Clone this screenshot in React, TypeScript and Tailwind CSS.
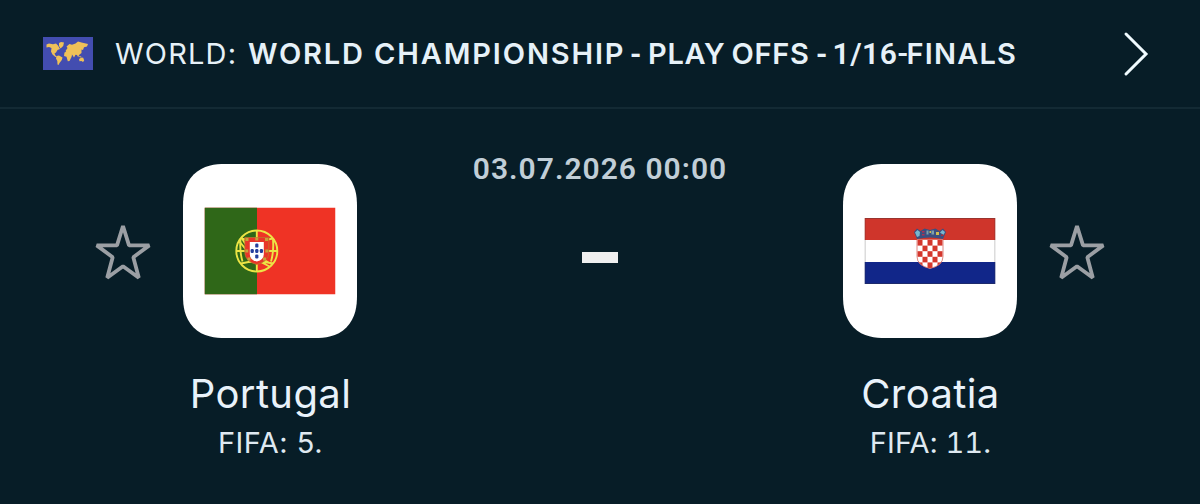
import React from "react";

const SHIELDS = [[0, 0], [-4.6, 0], [4.6, 0], [0, -5.4], [0, 5.4]];

function WorldMap() {
  return (
    <svg width="50" height="33" viewBox="0 0 50 33" className="shrink-0">
      <rect width="50" height="33" fill="#434db0" />
      <g fill="#efc158">
        <path d="M3.5 7.500 6 6.500l4 .8 3-.8 2 2 2 3.500-2.500 1-1.500 2.500-1.500 1 1 2 1.500 1.500-1.500 0-3-2.500-1.500-3L8.500 11 6 10l-2.500.5z" />
        <path d="M16 6 18 5l3 .5-.8 3.500-2.700 2.500-1.500-2.500z" />
        <path d="M13.500 19l2.500-.5 3.500 2-.7 2.500-2.300 3-1 2-1-.5-.2-3.500-1.300-2.500z" />
        <path d="M21.500 15.500l3.500-1.500 2.500.8 1.500 3.200-.5 2-2 4-1.700.2-1.300-4.500-2.500-.8z" />
        <path d="M22.500 14l2-3-1-1.500L26.500 7l2.500.8 3.500-1.300L35 4.500l3.500 1 6.500 1.500-1 2.500-3 .8-1 2.700-1.500-.5 0 3.500-2.500 2-.8 2.200-1.200-2.300-1.500-.2-1.500 2.700-1.800-2.700-1.700 0-2-2.800-2 .5z" />
        <path d="M36 22l2.500-1.500 1.700.3 1 2.700-1.200 1.500-1.500-1-2 .3zM35 18.500l3.500 1.300-1 .7z" />
      </g>
    </svg>
  );
}

function Star() {
  return (
    <svg width="56" height="56" viewBox="0 0 56 56" className="shrink-0" fill="none" stroke="#9b9fa4" strokeWidth="3.8" strokeLinejoin="bevel">
      <path d="M28 2 34 21.400H54.300L38.300 33.200 43.800 53.700 28 42.300 12.200 53.700 17.700 33.200 1.700 21.400H22Z" />
    </svg>
  );
}

function Portugal() {
  return (
    <svg width="131" height="87" viewBox="0 0 131 87" className="-translate-x-[0.5px] -translate-y-[0.5px]">
      <rect width="131" height="87" fill="#ef3325" />
      <rect width="52.500" height="87" fill="#2f6718" />
      <g fill="none" stroke="#ece445" strokeWidth="1.900">
        <circle cx="52.300" cy="43.500" r="20.500" />
        <path d="M52.300 23v41M32 43.500h41M36.500 31q16 4 32 0M36.500 56q16-4 32 0M35 34q12 17 30 25M37 30q9 17 31 27" />
        <path d="M36 32q-1 12 2 22M68.500 32q1 12-2 22" />
      </g>
      <path d="M40.300 30h24v15q0 9-12 12-12-3-12-12z" fill="#e8352a" stroke="#b9802c" strokeWidth=".7" />
      <path d="M45.300 34.500h14v12q0 6-7 7.500-7-1.500-7-7.500z" fill="#fff" />
      {SHIELDS.map(([x, y]) => <rect key={`${x},${y}`} x={50.700 + x} y={41.500 + y} width="3.200" height="4" rx="1.200" fill="#243f9d" />)}
      <path d="M41 30.500h3v3h-3zM50.800 30h3v3h-3zM60.500 30.500h3v3h-3zM40.800 42h3v3h-3zM60.800 42h3v3h-3zM43 50h3v3h-3zM58.500 50h3v3h-3z" fill="#c9a13a" />
    </svg>
  );
}

function Croatia() {
  const cells = Array.from({ length: 25 }, (_, i) => i).filter((i) => i % 2 === 0);
  return (
    <svg width="131" height="66" viewBox="0 0 131 66" className="translate-x-[0.5px]">
      <defs><clipPath id="shield"><path d="M52.500 21.500h26v17q0 9-13 12-13-3-13-12z" /></clipPath></defs>
      <rect width="131" height="66" fill="#fff" />
      <rect width="131" height="22" fill="#cf352b" />
      <rect y="44" width="131" height="22" fill="#112689" />
      <rect x=".5" y=".5" width="130" height="65" fill="none" stroke="#333" strokeOpacity=".35" />
      <g clipPath="url(#shield)">
        <rect x="52" y="21" width="27" height="30" fill="#fff" />
        {cells.map((i) => <rect key={i} x={53 + (i % 5) * 5} y={22 + Math.floor(i / 5) * 5.600} width="5" height="5.600" fill="#d4362c" />)}
      </g>
      <path d="M52.500 21.500h26v17q0 9-13 12-13-3-13-12z" fill="none" stroke="#d8685f" strokeWidth=".8" />
      <path d="M49.500 14 52.500 10.500 56 13l4-2.500 5.500 1.500 5.500-1.500 4 2.500 3.500-2.500 3 3.500-3 7q-13-3-26 0z" fill="#3b4f80" />
      <path d="M50.500 14.500l2.500-2.500 2.500 2-.5 4-2.500 1z" fill="#79b8cf" />
      <path d="M57.500 13h2.500v1.500h-2.500zM57.500 16h2.500v1.500h-2.500z" fill="#b13051" />
      <path d="M62 12.500h2v4h-2zM67 12.500h2.500v4h-2.500z" fill="#7b9fae" />
      <path d="M65 13h1.500v2h-1.500zM71.500 14h3v3h-3z" fill="#cfbd4f" />
      <path d="M75.500 14.500l2.500-2.500 2.500 2-1.500 3z" fill="#79b8cf" />
      <path d="M76.500 16.500h2.500v1.500h-2.500z" fill="#a53040" />
    </svg>
  );
}

function Team({ name, rank, rankClass, children }: { name: string; rank: string; rankClass: string; children: React.ReactNode }) {
  return (
    <div className="flex w-[174px] flex-col items-center">
      <div className="flex h-[174px] w-[174px] items-center justify-center rounded-[42px] bg-white [corner-shape:superellipse(1.25)]">{children}</div>
      <div className="mt-8 whitespace-nowrap pl-px text-[40px] leading-[48px] tracking-[0.4px] text-[#e9f2fa]">{name}</div>
      <div className={`mt-[7px] whitespace-nowrap pl-px text-[29px] leading-[36px] text-[#dfe9f1] ${rankClass}`}>{rank}</div>
    </div>
  );
}

export default function App() {
  return (
    <main className="h-[504px] w-[1200px] overflow-hidden bg-[#071d27] font-['Inter',sans-serif]">
      <header className="flex h-[109px] items-center border-b-2 border-[#132a34] pl-[43px] pr-[51px]">
        <WorldMap />
        <div className="ml-[22px] flex whitespace-nowrap text-[29px] leading-9 text-[#e6f1f8]">
          <span className="w-[133px] tracking-[1.2px]">WORLD:</span>
          <span className="w-[382px] font-semibold tracking-[1.85px]">WORLD CHAMPIONSHIP</span>
          <span className="w-[18px] font-['Roboto',sans-serif] font-bold">-</span>
          <span className="w-[168px] font-semibold tracking-[0.7px] [word-spacing:-2px]">PLAY OFFS</span>
          <span className="w-[16.5px] font-['Roboto',sans-serif] font-bold">-</span>
          <span className="w-[74px] font-['Roboto',sans-serif] text-[30px] font-semibold tracking-[0.5px]">1/16-</span>
          <span className="font-semibold tracking-[1.2px]">FINALS</span>
        </div>
        <svg width="26" height="46" viewBox="0 0 26 46" className="ml-auto" fill="none" stroke="#f0fbff" strokeWidth="3" strokeLinecap="round"><path d="M3 3 23 23 3 43" /></svg>
      </header>
      <section className="flex justify-between px-[95px] pt-[55px]">
        <div className="flex gap-8">
          <div className="pt-[59.5px]"><Star /></div>
          <Team name="Portugal" rank="FIFA: 5." rankClass="tracking-[0.5px]"><Portugal /></Team>
        </div>
        <div className="flex flex-col items-center">
          <time className="-mt-[13px] whitespace-nowrap font-['Roboto',sans-serif] text-[30px] font-semibold leading-9 tracking-[1px] text-[#c1ced7]">03.07.2026 00:00</time>
          <div className="mt-[65px] h-[11px] w-9 bg-[#efefef]" />
        </div>
        <div className="flex gap-8">
          <Team name="Croatia" rank="FIFA: 11." rankClass="tracking-[0.1px] tabular-nums"><Croatia /></Team>
          <div className="pt-[59.5px]"><Star /></div>
        </div>
      </section>
    </main>
  );
}
